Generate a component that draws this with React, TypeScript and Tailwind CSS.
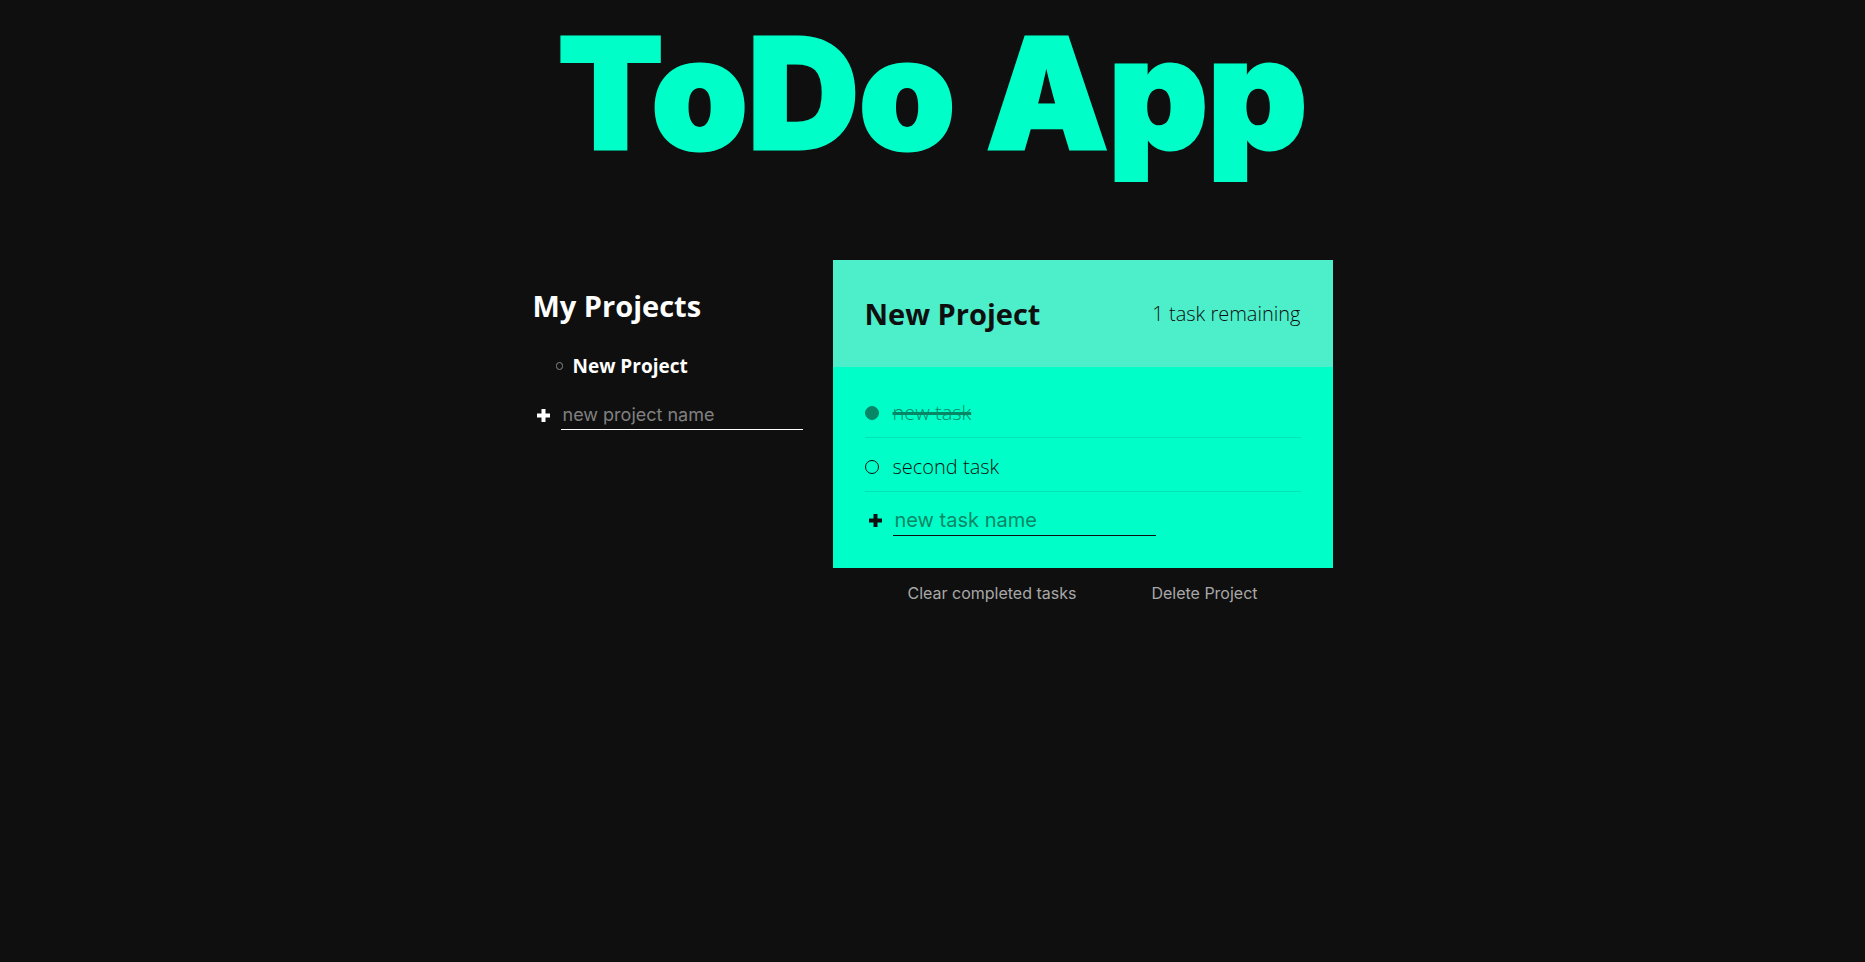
import { useState, type FormEvent } from "react";

type Task = { id: string; name: string; complete: boolean };

const initialTasks: Task[] = [
  { id: "task-1", name: "new task", complete: true },
  { id: "task-2", name: "second task", complete: false },
];

function PlusIcon() {
  return (
    <svg viewBox="0 0 13 13" className="size-[13px]" fill="currentColor" aria-hidden="true">
      <path d="M4.5 0h4v4.5H13v4H8.5V13h-4V8.5H0v-4h4.5z" />
    </svg>
  );
}

function Projects() {
  return (
    <section className="pt-6">
      <h2 className="text-[29px] leading-11 font-bold">My Projects</h2>
      <ul className="mt-5 pl-[23px]">
        <li className="flex items-center gap-[10px] leading-9">
          <span className="h-2 w-[7px] rounded-full border border-[#888888]" />
          <button type="button" className="text-[19px] font-bold">New Project</button>
        </li>
      </ul>
      <form className="mt-4 flex items-center" onSubmit={(e: FormEvent) => e.preventDefault()}>
        <button type="submit" aria-label="create new project" className="w-7 pl-1">
          <PlusIcon />
        </button>
        <input
          type="text"
          aria-label="new project name"
          placeholder="new project name"
          className="h-[30px] min-w-0 flex-1 border-b border-white bg-transparent px-[2px] font-['Inter',sans-serif] text-[18px] outline-none placeholder:text-[#808080]"
        />
      </form>
    </section>
  );
}

function TaskRow({ task, onToggle }: { task: Task; onToggle: () => void }) {
  return (
    <li className="border-b border-black/10">
      <label
        htmlFor={task.id}
        className="flex h-[53px] cursor-pointer items-center gap-[14px] pt-1 text-[20px] font-light"
      >
        <input
          id={task.id}
          type="checkbox"
          checked={task.complete}
          onChange={onToggle}
          className="size-[14px] appearance-none rounded-full border border-[#0f0f0f] checked:border-[#078766] checked:bg-[#078766]"
        />
        <span className={task.complete ? "text-[#078766] line-through decoration-3" : ""}>{task.name}</span>
      </label>
    </li>
  );
}

export default function App() {
  const [tasks, setTasks] = useState(initialTasks);
  const remaining = tasks.filter((t) => !t.complete).length;
  const toggle = (id: string) =>
    setTasks(tasks.map((t) => (t.id === id ? { ...t, complete: !t.complete } : t)));

  return (
    <div className="min-h-screen bg-[#0f0f0f] font-['Open_Sans',sans-serif] text-white">
      <h1 className="text-center font-['Inter',sans-serif] text-[154px] leading-[186px] font-black text-[#00ffc8] [-webkit-text-stroke:3px_currentColor]">
        ToDo App
      </h1>
      <main className="mx-auto mt-[74px] grid max-w-[800px] grid-cols-[minmax(0,270px)_minmax(0,500px)] items-start justify-between">
        <Projects />
        <section>
          <div className="bg-[#00ffc8] text-[#0f0f0f]">
            <header className="flex h-[107px] items-center justify-between bg-[#4deeca] px-8">
              <h2 className="text-[29px] font-bold">New Project</h2>
              <p className="text-[20px] font-light">{remaining} task remaining</p>
            </header>
            <div className="px-8 pt-[17px] pb-8">
              <ul>
                {tasks.map((t) => (
                  <TaskRow key={t.id} task={t} onToggle={() => toggle(t.id)} />
                ))}
              </ul>
              <form className="mt-3 flex items-center" onSubmit={(e: FormEvent) => e.preventDefault()}>
                <button type="submit" aria-label="create new task" className="w-7 pl-1">
                  <PlusIcon />
                </button>
                <input
                  type="text"
                  aria-label="new task name"
                  placeholder="new task name"
                  className="h-8 w-[263px] border-b border-[#0f0f0f] bg-transparent px-[2px] font-['Inter',sans-serif] text-[20px] outline-none placeholder:text-[#078766]"
                />
              </form>
            </div>
          </div>
          <div className="flex justify-evenly pt-[13px] font-['Inter',sans-serif] text-[16px] leading-6 text-[#a8a8a8]">
            <button type="button">Clear completed tasks</button>
            <button type="button">Delete Project</button>
          </div>
        </section>
      </main>
    </div>
  );
}
